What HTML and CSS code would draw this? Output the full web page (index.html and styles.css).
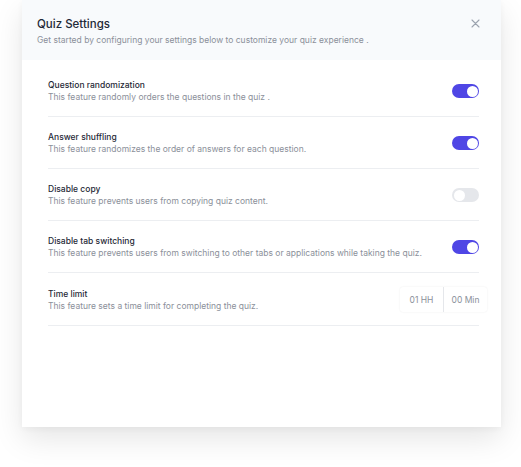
FILE: index.html
```html
<!DOCTYPE html>
<html>
<head>
<meta charset="utf-8">
<link rel="stylesheet" href="styles.css">
</head>
<body>
<div class="card">
  <div class="header">
    <div class="header-text">
      <div class="title">Quiz Settings</div>
      <div class="subtitle">Get started by configuring your settings below to customize your quiz experience .</div>
    </div>
    <svg class="close" width="9" height="9" viewBox="0 0 9 9"><path d="M1 1L8 8M8 1L1 8" stroke="#9ca3af" stroke-width="1.1" stroke-linecap="round"/></svg>
  </div>
  <div class="list">
    <div class="row">
      <div class="info">
        <div class="name">Question randomization</div>
        <div class="desc">This feature randomly orders the questions in the quiz .</div>
      </div>
      <div class="toggle on"><span class="knob"></span></div>
    </div>
    <div class="row">
      <div class="info">
        <div class="name">Answer shuffling</div>
        <div class="desc">This feature randomizes the order of answers for each question.</div>
      </div>
      <div class="toggle on"><span class="knob"></span></div>
    </div>
    <div class="row">
      <div class="info">
        <div class="name">Disable copy</div>
        <div class="desc">This feature prevents users from copying quiz content.</div>
      </div>
      <div class="toggle"><span class="knob"></span></div>
    </div>
    <div class="row">
      <div class="info">
        <div class="name">Disable tab switching</div>
        <div class="desc">This feature prevents users from switching to other tabs or applications while taking the quiz.</div>
      </div>
      <div class="toggle on"><span class="knob"></span></div>
    </div>
    <div class="row">
      <div class="info">
        <div class="name">Time limit</div>
        <div class="desc">This feature sets a time limit for completing the quiz.</div>
      </div>
      <div class="time">
        <span class="seg">01 HH</span>
        <span class="seg">00 Min</span>
      </div>
    </div>
  </div>
</div>
</body>
</html>
```
FILE: styles.css
```css
html, body {
  margin: 0;
  padding: 0;
  background: #ffffff;
}
body {
  font-family: Inter, "Noto Sans", sans-serif;
  padding: 0 20px 40px 22px;
}
.card {
  width: 479px;
  height: 427px;
  background: #ffffff;
  box-shadow: 0 12px 28px rgba(0, 0, 0, 0.10), 0 2px 6px rgba(0, 0, 0, 0.04);
  display: flex;
  flex-direction: column;
}
.header {
  height: 60px;
  box-sizing: border-box;
  background: #f8fafc;
  padding: 17px 21px 0 15px;
  display: flex;
  justify-content: space-between;
  align-items: flex-start;
}
.title {
  font-size: 11.5px;
  font-weight: 500;
  color: #1f2937;
  line-height: 15px;
}
.subtitle {
  margin-top: 2px;
  font-size: 8.5px;
  color: #8b909a;
  line-height: 12px;
}
.close {
  margin-top: 2px;
}
.list {
  padding: 5px 22px 0 26px;
}
.row {
  display: flex;
  align-items: center;
  justify-content: space-between;
  padding: 14px 0 13px;
  border-bottom: 1px solid #eceef1;
}
.name {
  font-size: 8.5px;
  font-weight: 500;
  color: #1f2937;
  line-height: 12px;
}
.desc {
  font-size: 8.5px;
  color: #8b909a;
  line-height: 12px;
}
.toggle {
  width: 27px;
  height: 14px;
  border-radius: 7px;
  background: #e5e7eb;
  box-sizing: border-box;
  padding: 1.5px;
  display: flex;
}
.toggle.on {
  background: #4f46e5;
  justify-content: flex-end;
}
.knob {
  width: 11px;
  height: 11px;
  border-radius: 50%;
  background: #ffffff;
}
.time {
  display: flex;
  height: 25px;
  margin-right: -8px;
  border-radius: 3px;
  box-shadow: 0 0 2px rgba(0, 0, 0, 0.08);
  background: #ffffff;
}
.seg {
  display: flex;
  align-items: center;
  justify-content: center;
  font-size: 8.5px;
  color: #8b909a;
  width: 43px;
}
.seg + .seg {
  border-left: 1px solid #e5e7eb;
}
```
